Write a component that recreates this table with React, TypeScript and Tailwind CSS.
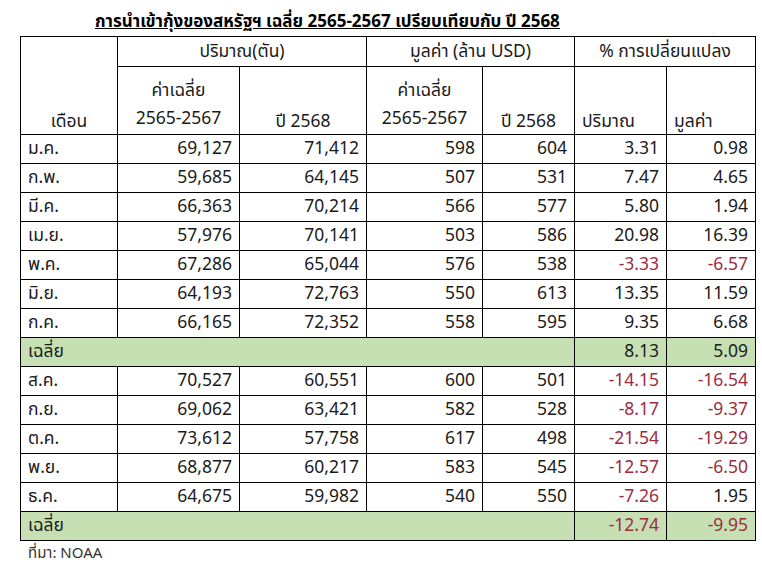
import React from "react"

// ข้อมูลการนำเข้ากุ้ง
const rows1 = [
  { m: "ม.ค.", q1: "69,127", q2: "71,412", v1: "598", v2: "604", pq: "3.31", pv: "0.98" },
  { m: "ก.พ.", q1: "59,685", q2: "64,145", v1: "507", v2: "531", pq: "7.47", pv: "4.65" },
  { m: "มี.ค.", q1: "66,363", q2: "70,214", v1: "566", v2: "577", pq: "5.80", pv: "1.94" },
  { m: "เม.ย.", q1: "57,976", q2: "70,141", v1: "503", v2: "586", pq: "20.98", pv: "16.39" },
  { m: "พ.ค.", q1: "67,286", q2: "65,044", v1: "576", v2: "538", pq: "-3.33", pv: "-6.57" },
  { m: "มิ.ย.", q1: "64,193", q2: "72,763", v1: "550", v2: "613", pq: "13.35", pv: "11.59" },
  { m: "ก.ค.", q1: "66,165", q2: "72,352", v1: "558", v2: "595", pq: "9.35", pv: "6.68" },
]

const rows2 = [
  { m: "ส.ค.", q1: "70,527", q2: "60,551", v1: "600", v2: "501", pq: "-14.15", pv: "-16.54" },
  { m: "ก.ย.", q1: "69,062", q2: "63,421", v1: "582", v2: "528", pq: "-8.17", pv: "-9.37" },
  { m: "ต.ค.", q1: "73,612", q2: "57,758", v1: "617", v2: "498", pq: "-21.54", pv: "-19.29" },
  { m: "พ.ย.", q1: "68,877", q2: "60,217", v1: "583", v2: "545", pq: "-12.57", pv: "-6.50" },
  { m: "ธ.ค.", q1: "64,675", q2: "59,982", v1: "540", v2: "550", pq: "-7.26", pv: "1.95" },
]

const cell = "border border-black px-[7px] h-[29px] align-middle"
const num = cell + " text-right"

function pct(v: string) {
  return v.startsWith("-") ? "text-[#9b2d40]" : ""
}

function DataRow({ r }: { r: typeof rows1[number] }) {
  return (
    <tr>
      <td className={cell + " text-left"}>{r.m}</td>
      <td className={num}>{r.q1}</td>
      <td className={num}>{r.q2}</td>
      <td className={num}>{r.v1}</td>
      <td className={num}>{r.v2}</td>
      <td className={num + " " + pct(r.pq)}>{r.pq}</td>
      <td className={num + " " + pct(r.pv)}>{r.pv}</td>
    </tr>
  )
}

function AvgRow({ pq, pv }: { pq: string; pv: string }) {
  return (
    <tr className="bg-[#c6e0b4]">
      <td colSpan={5} className={cell + " text-left"}>เฉลี่ย</td>
      <td className={num + " " + pct(pq)}>{pq}</td>
      <td className={num + " " + pct(pv)}>{pv}</td>
    </tr>
  )
}

export default function App() {
  return (
    <div
      className="w-[762px] h-[566px] bg-white text-[#1a1a1a] overflow-hidden"
      style={{ fontFamily: "Tahoma, 'Noto Sans Thai', 'Leelawadee UI', 'Noto Sans', sans-serif" }}
    >
      <div className="pl-[95px] pt-[11px] h-[36px] text-[17px] font-bold underline leading-[22px] text-black">
        การนำเข้ากุ้งของสหรัฐฯ เฉลี่ย 2565-2567 เปรียบเทียบกับ ปี 2568
      </div>
      <table className="ml-[20px] border-collapse table-fixed w-[735px] text-[17.5px] leading-[22px]">
        <colgroup>
          <col className="w-[97px]" />
          <col className="w-[122px]" />
          <col className="w-[127px]" />
          <col className="w-[116px]" />
          <col className="w-[92px]" />
          <col className="w-[92px]" />
          <col className="w-[89px]" />
        </colgroup>
        <thead>
          <tr className="h-[30px]">
            <th rowSpan={2} className="border border-black font-normal align-bottom pb-[1px]">เดือน</th>
            <th colSpan={2} className="border border-black font-normal">ปริมาณ(ตัน)</th>
            <th colSpan={2} className="border border-black font-normal">มูลค่า (ล้าน USD)</th>
            <th colSpan={2} className="border border-black font-normal">% การเปลี่ยนแปลง</th>
          </tr>
          <tr className="h-[68px]">
            <th className="border border-black font-normal align-bottom pb-[1px] leading-[28px]">
              ค่าเฉลี่ย
              <br />
              2565-2567
            </th>
            <th className="border border-black font-normal align-bottom pb-[1px]">ปี 2568</th>
            <th className="border border-black font-normal align-bottom pb-[1px] leading-[28px]">
              ค่าเฉลี่ย
              <br />
              2565-2567
            </th>
            <th className="border border-black font-normal align-bottom pb-[1px]">ปี 2568</th>
            <th className="border border-black font-normal align-bottom pb-[1px] text-left px-[7px]">ปริมาณ</th>
            <th className="border border-black font-normal align-bottom pb-[1px] text-left px-[7px]">มูลค่า</th>
          </tr>
        </thead>
        <tbody>
          {rows1.map((r) => (
            <DataRow key={r.m} r={r} />
          ))}
          <AvgRow pq="8.13" pv="5.09" />
          {rows2.map((r) => (
            <DataRow key={r.m} r={r} />
          ))}
          <AvgRow pq="-12.74" pv="-9.95" />
        </tbody>
      </table>
      <div className="pl-[28px] pt-[2px] text-[15px] text-[#333]">ที่มา: NOAA</div>
    </div>
  )
}
